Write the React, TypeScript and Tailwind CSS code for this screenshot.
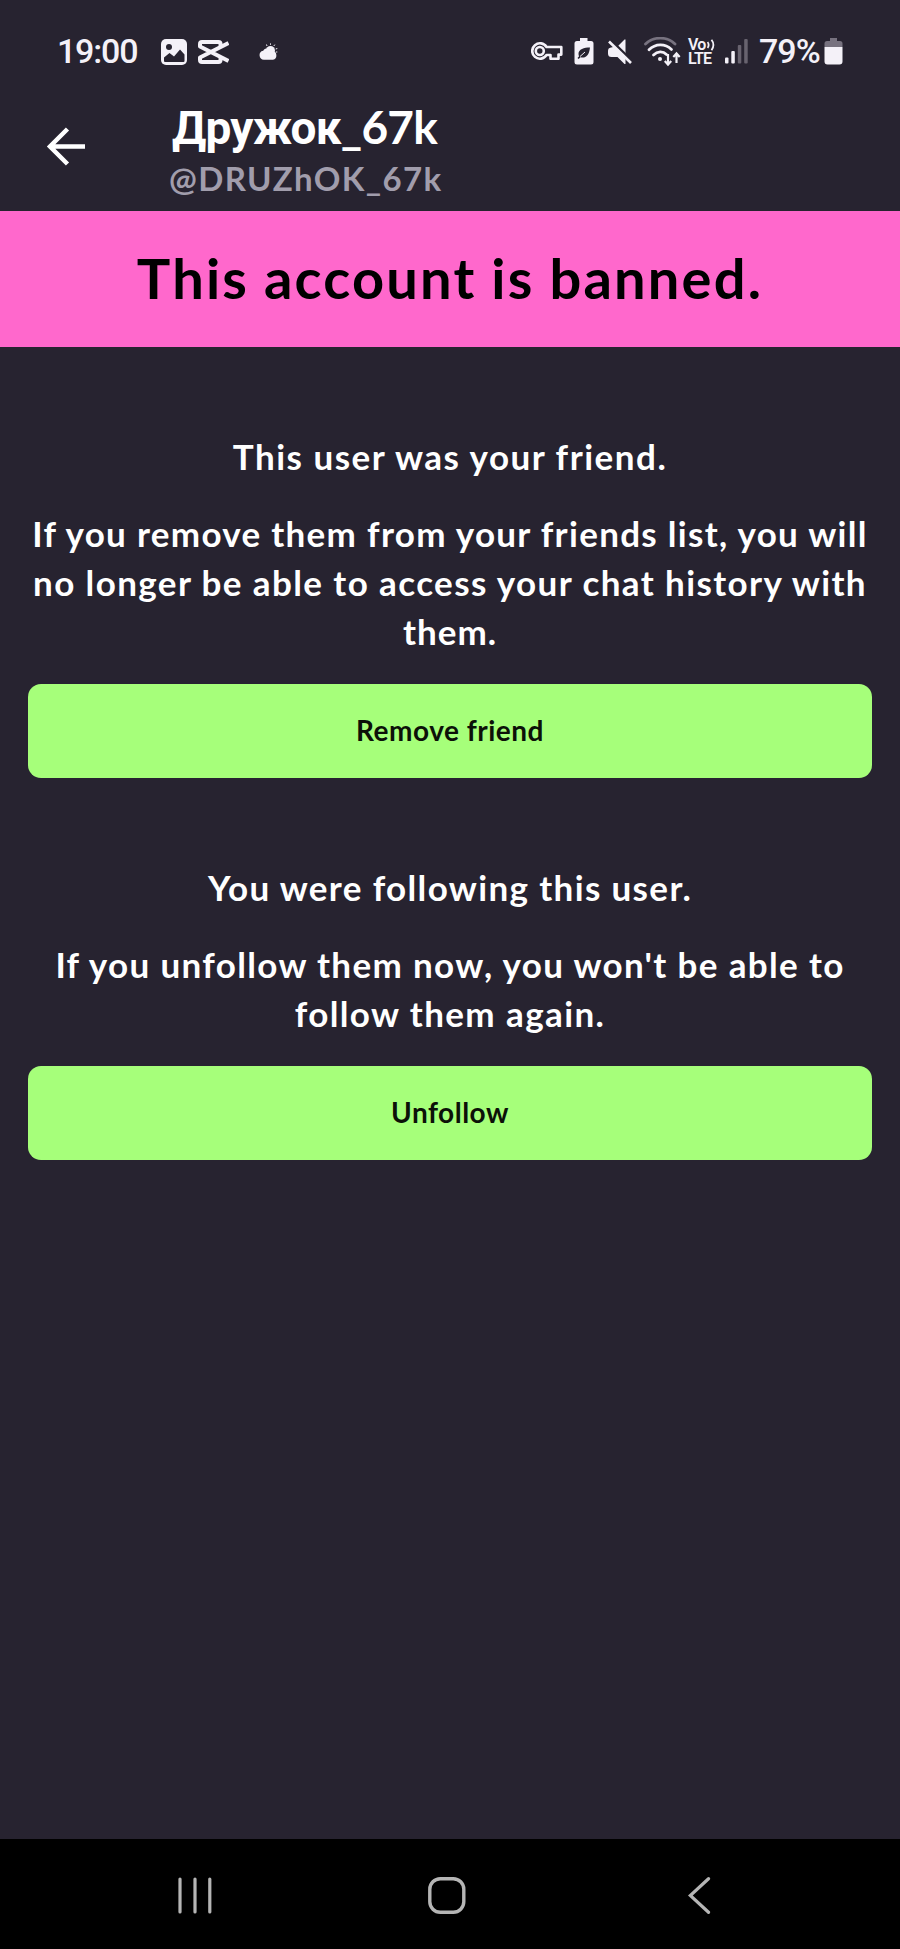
import type { ReactNode } from 'react';

interface NoticeProps {
  title: string;
  titleClass: string;
  lines: { text: string; className: string }[];
  action: string;
  actionClass: string;
}

function StatusBar() {
  return (
    <div className="flex h-[102px] items-start pl-[57px] pt-[37px] text-[#f4f1f8]">
      <span className="w-[104px] font-['Roboto'] text-[34px] font-medium leading-[28px] tracking-[-1.2px]">
        19:00
      </span>

      {/* gallery */}
      <svg className="mt-[2px] h-[26px] w-[26px]" viewBox="0 0 26 26">
        <rect width="26" height="26" rx="5" fill="currentColor" />
        <circle cx="8" cy="8" r="3" fill="#272330" />
        <path d="M3 18.500L8.500 14l4.500 3.500 6-7 4.500 5V22a1 1 0 0 1-1 1H4a1 1 0 0 1-1-1z" fill="#272330" />
      </svg>
      {/* capcut */}
      <svg className="ml-[10px] mt-[2px] h-[26px] w-[32px]" viewBox="0 0 32 26" fill="none" stroke="currentColor" strokeWidth="4" strokeLinejoin="round">
        <path d="M23.500 7V5a2 2 0 0 0-2-2H5a2 2 0 0 0-2 2v2.500l28.500 14.500M23.500 19v2a2 2 0 0 1-2 2H5a2 2 0 0 1-2-2v-2.500L31.500 4" />
      </svg>
      {/* weather */}
      <svg className="ml-[30px] mt-[6px] h-[18px] w-[19px]" viewBox="0 0 19 18">
        <path d="M8 3l-.5-1.500M11.500 1.800V.4M14.800 3l1-1.400M16.700 6l1.600-.5M16.800 9h1.500" stroke="currentColor" strokeWidth="1" />
        <circle cx="11.500" cy="7.500" r="4.500" fill="currentColor" />
        <path d="M5 16.800a4.600 4.600 0 0 1-.8-9.100A5.500 5.500 0 0 1 13.600 8a4.500 4.500 0 0 1 .4 8.800z" fill="currentColor" />
      </svg>

      {/* vpn key */}
      <svg className="ml-[253px] mt-[4px] h-[20px] w-[32px]" viewBox="0 0 32 20" fill="none" stroke="currentColor" strokeWidth="2.600" strokeLinejoin="round">
        <path d="M15.500 6A7.700 7.700 0 1 0 15.500 14H19.500V17.800H27.500V13.600H30.300V6z" />
        <circle cx="8.800" cy="10" r="4" strokeWidth="2.600" />
      </svg>
      {/* battery saver */}
      <svg className="ml-[11px] mt-[1px] h-[27px] w-[20px]" viewBox="0 0 20 27">
        <path d="M6 0h7.500v3H17a2.500 2.500 0 0 1 2.500 2.500v18.500a2.500 2.500 0 0 1-2.500 2.500H3a2.500 2.500 0 0 1-2.500-2.500V5.500A2.500 2.500 0 0 1 3 3h3z" fill="currentColor" />
        <path d="M16 9.500C10 9.500 4.500 11 4.500 16c0 1 .3 1.700.6 2.200L3.500 20l1.200.9 1.700-1.700c4.600 1.200 8.600-.6 9.600-9.700z" fill="#272330" />
        <path d="M6 18.500l5-4.500" stroke="currentColor" strokeWidth="1" />
      </svg>
      {/* muted */}
      <svg className="ml-[13px] mt-[2px] h-[26px] w-[26px]" viewBox="0 0 26 26">
        <path d="M11 7l6.500-6.500h1V25h-1L10.500 18H4.500A3.500 3.500 0 0 1 1 14.500V12a3.500 3.500 0 0 1 3-3.500z" fill="currentColor" />
        <path d="M4 1.500L25.500 22.500" stroke="#272330" strokeWidth="2.800" />
        <path d="M2 2.500L24 24" stroke="currentColor" strokeWidth="2.600" />
      </svg>
      {/* wifi */}
      <svg className="ml-[11px] h-[30px] w-[38px]" viewBox="0 0 38 30" fill="none" stroke="currentColor" strokeWidth="2.800" strokeLinecap="round">
        <path d="M1.500 7C9.500-.8 23-.8 31 7" stroke="#77727f" />
        <path d="M5 12.800C11.500 6.200 21 6.200 27.500 12.400" />
        <path d="M9.500 18c4-4 9.500-4 13-.5" />
        <circle cx="16" cy="22" r="2" fill="currentColor" stroke="none" />
        <path d="M24 17v10M20.800 24l3.200 3.500 3.200-3.500M32.500 26v-9M29.300 20l3.200-3.500 3.200 3.500" strokeWidth="2.200" strokeLinecap="butt" />
      </svg>
      <div className="ml-[6px] w-[28px] font-['Roboto'] text-[16px] font-semibold leading-[16px]">
        <div className="flex h-[14px] whitespace-nowrap tracking-[-0.8px]">
          Vo
          <svg className="ml-px mt-[2px] h-[12px] w-[9px]" viewBox="0 0 9 12" fill="none" stroke="currentColor" strokeWidth="1.800">
            <path d="M.5 3q2.300 3 0 6M4.500 .8q3.800 5 0 10.400" />
          </svg>
        </div>
        <div className="tracking-[-0.8px]">LTE</div>
      </div>
      {/* signal */}
      <svg className="ml-[9px] mt-[2px] h-[25px] w-[23px]" viewBox="0 0 23 25" fill="currentColor">
        <rect y="18.500" width="3.500" height="6" rx="1" />
        <rect x="6.300" y="12" width="3.500" height="12.500" rx="1" />
        <rect x="12.800" y="6" width="3.500" height="18.500" rx="1" fill="#68636f" />
        <rect x="19.200" width="3.500" height="24.500" rx="1" fill="#68636f" />
      </svg>
      <span className="ml-[11px] w-[66px] font-['Roboto'] text-[34px] font-medium leading-[28px] tracking-[-1px]">
        79%
      </span>
      {/* battery */}
      <svg className="-ml-px mt-[1px] h-[27px] w-[19px]" viewBox="0 0 19 27">
        <path d="M6 0h7v3h3a2.500 2.500 0 0 1 2.500 2.500V9H.5V5.500A2.500 2.500 0 0 1 3 3h3z" fill="#77727f" />
        <path d="M.5 9h18v14.500a3 3 0 0 1-3 3h-12a3 3 0 0 1-3-3z" fill="currentColor" />
      </svg>
    </div>
  );
}

function Header() {
  return (
    <header className="flex h-[109px] items-start pl-[46px]">
      <svg className="mt-[25px] h-[39px] w-[40px]" viewBox="0 0 40 39" fill="none" stroke="#fff" strokeWidth="4.500">
        <path d="M39 19.500H3.500M21.500 2L4 19.500 21.500 37" />
      </svg>
      <div className="-mt-px ml-[83px]">
        <h1 className="ml-[3px] whitespace-nowrap text-[46px] font-bold leading-[52px] text-white">
          <span className="font-['Roboto'] tracking-[-0.8px]">Дружок</span>
          <span className="tracking-[-0.8px]">_67k</span>
        </h1>
        <p className="whitespace-nowrap text-[33px] font-bold leading-[48px] tracking-[1.35px] text-[#a19dac]">@DRUZhOK_67k</p>
      </div>
    </header>
  );
}

function ActionButton({ children, className }: { children: ReactNode; className: string }) {
  return (
    <button className="flex h-[94px] w-full items-center justify-center rounded-[13px] bg-[#a6ff7a] pb-[2px] text-[28px] font-bold text-[#0c1108]">
      <span className={className}>{children}</span>
    </button>
  );
}

function Notice({ title, titleClass, lines, action, actionClass }: NoticeProps) {
  return (
    <section className="px-7 text-center text-[35px] font-bold leading-[49px] text-white">
      <h2 className={titleClass}>{title}</h2>
      <p className="mb-[28px] mt-[28px]">
        {lines.map((line) => (
          <span key={line.text} className={`block whitespace-nowrap ${line.className}`}>
            {line.text}
          </span>
        ))}
      </p>
      <ActionButton className={actionClass}>{action}</ActionButton>
    </section>
  );
}

function NavBar() {
  return (
    <nav className="flex h-[110px] items-start bg-black pl-[178px] pt-[38px] text-[#b5b5b5]">
      <svg className="h-[37px] w-[34px]" viewBox="0 0 34 37" stroke="currentColor" strokeWidth="3.200" strokeLinecap="round">
        <path d="M2 2v33M17 2v33M31.800 2v33" />
      </svg>
      <svg className="ml-[216px] h-[37px] w-[38px]" viewBox="0 0 38 37" fill="none" stroke="currentColor" strokeWidth="3.400">
        <rect x="1.800" y="1.700" width="34" height="33.600" rx="10.500" />
      </svg>
      <svg className="ml-[222px] h-[37px] w-[24px]" viewBox="0 0 24 37" fill="none" stroke="currentColor" strokeWidth="3.200" strokeLinecap="round">
        <path d="M20.500 1.700L2.300 18.500l18.200 16.800" />
      </svg>
    </nav>
  );
}

export default function App() {
  return (
    <div className="flex h-[1949px] w-[900px] flex-col overflow-hidden bg-[#272330] font-['Lato','Liberation_Sans',sans-serif]">
      <StatusBar />
      <Header />
      <div className="flex h-[136px] items-center justify-center bg-[#ff68cc] pb-[2px] text-[56px] font-bold text-black">
        <span className="whitespace-nowrap tracking-[2.2px] [word-spacing:-1px]">This account is banned.</span>
      </div>

      <main className="flex flex-1 flex-col gap-[85px] pt-[85px]">
        <Notice
          title="This user was your friend."
          titleClass="tracking-[1.5px]"
          lines={[
            { text: 'If you remove them from your friends list, you will', className: 'tracking-[1.3px]' },
            { text: 'no longer be able to access your chat history with', className: 'tracking-[1.4px]' },
            { text: 'them.', className: 'tracking-[1px]' },
          ]}
          action="Remove friend"
          actionClass="tracking-[0.5px]"
        />
        <Notice
          title="You were following this user."
          titleClass="tracking-[1.35px]"
          lines={[
            { text: "If you unfollow them now, you won't be able to", className: 'tracking-[1.35px]' },
            { text: 'follow them again.', className: 'tracking-[1.4px]' },
          ]}
          action="Unfollow"
          actionClass="tracking-[0.5px]"
        />
      </main>
      <NavBar />
    </div>
  );
}
